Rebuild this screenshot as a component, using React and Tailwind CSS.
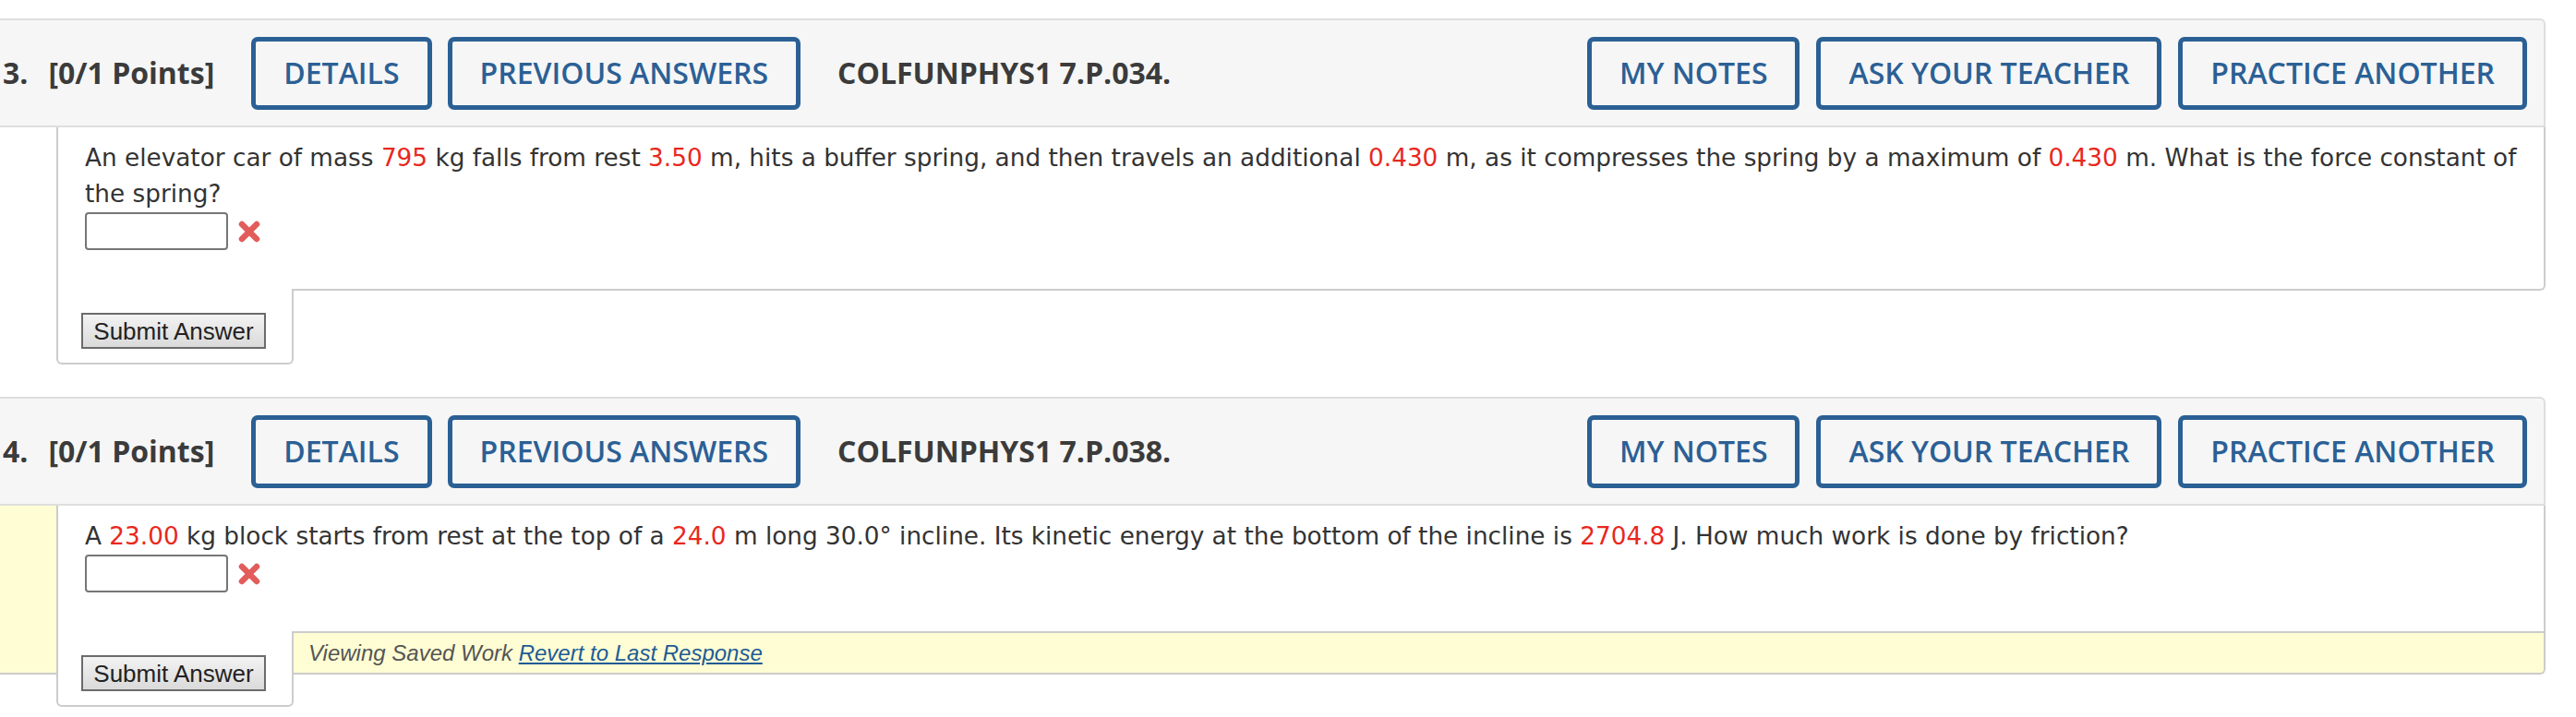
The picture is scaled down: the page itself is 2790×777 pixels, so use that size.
import React from "react";

function Num({ children }) {
  return <span className="text-[#e8281e]">{children}</span>;
}

function HeadButton({ children }) {
  return (
    <button className="h-[79px] px-[30px] border-[5px] border-[#2b6095] rounded-[7px] text-[#2b6095] text-[32px] font-semibold leading-none whitespace-nowrap">
      {children}
    </button>
  );
}

function WrongMark() {
  return (
    <svg width="28" height="28" viewBox="0 0 28 28" className="blur-[0.6px]">
      <path d="M6 6 L22 22 M22 6 L6 22" stroke="#e25c5c" strokeWidth="6.5" strokeLinecap="round" fill="none" />
    </svg>
  );
}

function Header({ num, code }) {
  return (
    <div className="flex items-center h-[118px] bg-[#f6f6f6] border-y-2 border-r-2 border-[#dedede] rounded-tr-[6px] pl-[3px] pr-[18px] font-['Open_Sans',sans-serif] text-[#3b3b3b] text-[32px]">
      <span className="font-bold">{num}.</span>
      <span className="ml-[22px] font-bold">[0/1 Points]</span>
      <div className="ml-[40px] flex gap-[17px]">
        <HeadButton>DETAILS</HeadButton>
        <HeadButton>PREVIOUS ANSWERS</HeadButton>
      </div>
      <span className="ml-[40px] font-bold whitespace-nowrap">{code}</span>
      <div className="ml-auto flex gap-[18px]">
        <HeadButton>MY NOTES</HeadButton>
        <HeadButton>ASK YOUR TEACHER</HeadButton>
        <HeadButton>PRACTICE ANOTHER</HeadButton>
      </div>
    </div>
  );
}

function SubmitTab() {
  return (
    <div className="relative z-10 -mt-[2px] w-[257px] shrink-0 bg-white border-x-2 border-b-2 border-[#cccccc] rounded-b-[6px] pt-[26px] pb-[15px] pl-[25px]">
      <button className="w-[200px] h-[39px] border-2 border-[#6b6b6b] bg-linear-to-b from-[#f3f3f3] to-[#dadada] text-[26px] leading-none text-[#222] font-['Liberation_Sans',Arial,sans-serif]">
        Submit Answer
      </button>
    </div>
  );
}

function Question({ num, code, saved, children }) {
  const body = (
    <div
      className={
        "ml-[61px] bg-white border-l-2 border-b-2 border-[#cccccc] pl-[29px] pr-[8px] pt-[14px] pb-[42px] text-[26.3px] leading-[39px] text-[#333] font-['DejaVu_Sans',Verdana,sans-serif] " +
        (saved ? "" : "border-r-2 rounded-br-[6px]")
      }
    >
      <p>{children}</p>
      <div className="flex items-center gap-[9px] h-[41px]">
        <input className="w-[155px] h-[41px] border-2 border-[#767676] rounded-[4px] bg-white" />
        <WrongMark />
      </div>
    </div>
  );

  return (
    <section className="w-[2757px]">
      <Header num={num} code={code} />
      {saved ? (
        <div className="bg-[#fffdd3] border-b-2 border-r-2 border-[#cccccc] rounded-br-[6px]">
          {body}
          <div className="flex items-start h-[43px] ml-[61px]">
            <SubmitTab />
            <div className="flex-1 h-[43px] flex items-center pl-[16px] text-[24px] italic font-['Liberation_Sans',Arial,sans-serif]">
              <span className="text-[#555]">Viewing Saved Work&nbsp;</span>
              <a className="text-[#1d5c96] underline">Revert to Last Response</a>
            </div>
          </div>
        </div>
      ) : (
        <div>
          {body}
          <div className="flex ml-[61px]">
            <SubmitTab />
          </div>
        </div>
      )}
    </section>
  );
}

export default function App() {
  return (
    <div className="w-[2790px] h-[777px] overflow-hidden bg-white pt-[20px]">
      <Question num="3" code="COLFUNPHYS1 7.P.034.">
        An elevator car of mass <Num>795</Num> kg falls from rest <Num>3.50</Num> m, hits a buffer spring, and then
        travels an additional <Num>0.430</Num> m, as it compresses the spring by a maximum of <Num>0.430</Num> m. What
        is the force constant of the spring?
      </Question>
      <div className="h-[35px]" />
      <Question num="4" code="COLFUNPHYS1 7.P.038." saved>
        A <Num>23.00</Num> kg block starts from rest at the top of a <Num>24.0</Num> m long 30.0° incline. Its kinetic
        energy at the bottom of the incline is <Num>2704.8</Num> J. How much work is done by friction?
      </Question>
    </div>
  );
}
